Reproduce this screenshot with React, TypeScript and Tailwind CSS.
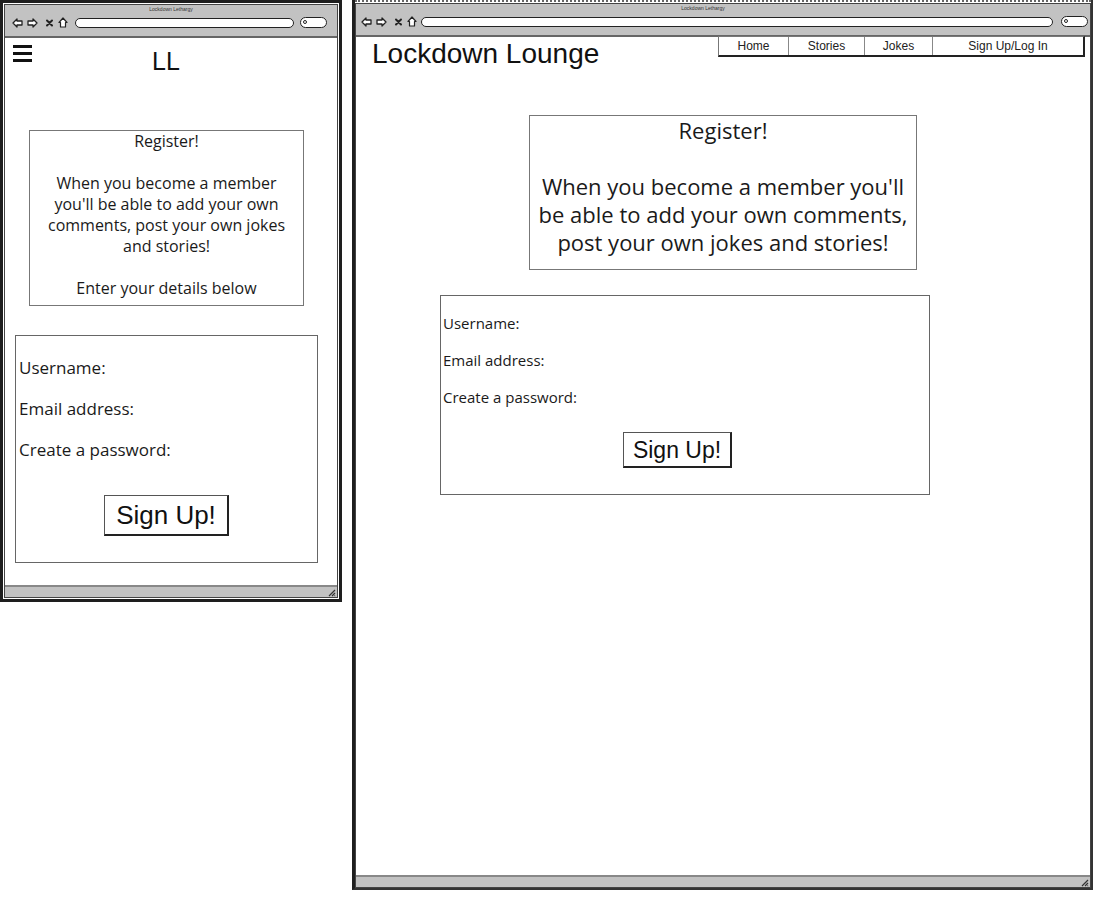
import React from 'react';

const sketch = "font-['Open_Sans',sans-serif]";
const arial = "font-['Liberation_Sans',Arial,sans-serif]";

const ChromeIcons: React.FC = () => (
  <div className="flex items-center gap-[4px] shrink-0">
    <svg width="11" height="10" viewBox="0 0 11 10">
      <polygon points="1,5 5,1 5,3 10,3 10,7 5,7 5,9" fill="white" stroke="#222" strokeWidth="1.3" strokeLinejoin="round" />
    </svg>
    <svg width="11" height="10" viewBox="0 0 11 10">
      <polygon points="10,5 6,1 6,3 1,3 1,7 6,7 6,9" fill="white" stroke="#222" strokeWidth="1.3" strokeLinejoin="round" />
    </svg>
    <svg width="9" height="10" viewBox="0 0 9 10" className="ml-[3px]">
      <path d="M2 2.5 L7 7.5 M7 2.5 L2 7.5" stroke="#222" strokeWidth="2" strokeLinecap="round" />
    </svg>
    <svg width="10" height="11" viewBox="0 0 10 11">
      <polygon points="1,5.5 5,1 9,5.5 7.5,5.5 7.5,10 2.5,10 2.5,5.5" fill="white" stroke="#222" strokeWidth="1.2" strokeLinejoin="round" />
    </svg>
  </div>
);

const SearchPill: React.FC = () => (
  <div className="relative h-[11px] w-[27px] shrink-0 rounded-full border-[1.5px] border-[#222] bg-white">
    <div className="absolute left-[2px] top-[2px] h-[4px] w-[4px] rounded-full border border-[#222]" />
  </div>
);

const Grip: React.FC = () => (
  <svg width="9" height="9" viewBox="0 0 9 9">
    <path d="M8 2 L2 8 M8 5 L5 8 M8 7.5 L7.5 8" stroke="#333" strokeWidth="1.2" />
  </svg>
);

interface WindowProps {
  width: string;
  height: string;
  wide?: boolean;
  children: React.ReactNode;
}

const BrowserWindow: React.FC<WindowProps> = ({ width, height, wide, children }) => (
  <div
    className={`${width} ${height} shrink-0 flex flex-col bg-white ${
      wide
        ? 'border-l-[3px] border-r-2 border-b-2 border-l-[#1e1e1e] border-r-[#333] border-b-[#333]'
        : 'border-[3px] border-[#1e1e1e]'
    }`}
  >
    {wide && <div className="h-[3px] shrink-0 border-t-2 border-dotted border-[#666]" />}
    <div className={`flex-1 flex flex-col border border-[#444] ${wide ? '' : 'm-[1px]'}`}>
      {/* chrome */}
      <div className="h-[33px] shrink-0 bg-[#c2c2c2] border-b-2 border-[#666] flex flex-col">
        <div className={`h-[9px] text-[5px] leading-[9px] text-[#333] ${arial} ${wide ? 'text-center pr-[40px]' : 'text-center'}`}>
          Lockdown Lethargy
        </div>
        <div className={`h-[17px] flex items-center ${wide ? 'pl-[5px] pr-[2px]' : 'pl-[7px] pr-[10px]'}`}>
          <ChromeIcons />
          <div className={`flex-1 h-[10px] rounded-full border-[1.5px] border-[#222] bg-white ${wide ? 'ml-[4px] mr-[8px]' : 'ml-[7px] mr-[6px]'}`} />
          <SearchPill />
        </div>
      </div>

      {/* page */}
      <div className="flex-1 flex flex-col">{children}</div>

      {/* status bar */}
      <div className="h-[12px] shrink-0 bg-[#c2c2c2] border-t-2 border-[#888] flex items-center justify-end pr-[1px]">
        <Grip />
      </div>
    </div>
  </div>
);

const SignUpButton: React.FC<{ big?: boolean }> = ({ big }) => (
  <button
    className={`${arial} bg-white text-[#111] border border-[#555] border-r-2 border-b-2 border-r-[#222] border-b-[#222] ${
      big ? 'w-[125px] h-[41px] text-[26px]' : 'w-[109px] h-[36px] text-[23px]'
    }`}
  >
    Sign Up!
  </button>
);

const MobileView: React.FC = () => (
  <BrowserWindow width="w-[342px]" height="h-[602px]">
    <div className="flex items-start pl-[8px]">
      <div className="mt-[7px] w-[19px] flex flex-col gap-[4px]">
        <div className="h-[3px] bg-[#111]" />
        <div className="h-[3px] bg-[#111]" />
        <div className="h-[3px] bg-[#111]" />
      </div>
      <div className={`flex-1 pr-[37px] mt-[11px] text-center text-[25px] leading-[25px] text-[#111] ${arial}`}>LL</div>
    </div>

    <div className={`ml-[24px] mt-[56px] w-[275px] h-[176px] border border-[#777] text-center text-[16px] leading-[21px] text-[#1a1a1a] ${sketch}`}>
      <p>Register!</p>
      <p className="mt-[21px]">
        When you become a member
        <br />
        you'll be able to add your own
        <br />
        comments, post your own jokes
        <br />
        and stories!
      </p>
      <p className="mt-[21px]">Enter your details below</p>
    </div>

    <div className={`ml-[10px] mt-[29px] w-[303px] h-[228px] border border-[#666] pl-[3px] pt-[22px] text-[17px] leading-[20px] text-[#1a1a1a] ${sketch}`}>
      <div className="flex flex-col gap-[21px]">
        <p>Username:</p>
        <p>Email address:</p>
        <p>Create a password:</p>
      </div>
      <div className="mt-[35px] flex justify-center pr-[3px]">
        <SignUpButton big />
      </div>
    </div>
  </BrowserWindow>
);

const NavCell: React.FC<{ label: string; w: string; last?: boolean }> = ({ label, w, last }) => (
  <div className={`${w} h-full flex items-center justify-center ${last ? '' : 'border-r border-[#888]'}`}>{label}</div>
);

const DesktopView: React.FC = () => (
  <BrowserWindow width="w-[741px]" height="h-[890px]" wide>
    <div className="flex items-start justify-between pl-[16px] pr-[5px]">
      <h1 className={`mt-[1px] text-[28px] leading-[32px] text-[#111] ${arial}`}>Lockdown Lounge</h1>
      <nav className={`-mt-[1px] h-[21px] flex border border-[#777] border-r-2 border-b-2 border-r-[#222] border-b-[#222] bg-white text-[12px] text-[#222] ${arial}`}>
        <NavCell label="Home" w="w-[70px]" />
        <NavCell label="Stories" w="w-[76px]" />
        <NavCell label="Jokes" w="w-[68px]" />
        <NavCell label="Sign Up/Log In" w="w-[150px]" last />
      </nav>
    </div>

    <div className={`self-center mt-[45px] w-[388px] h-[155px] border border-[#777] text-center text-[22px] leading-[28px] text-[#1a1a1a] ${sketch}`}>
      <p>Register!</p>
      <p className="mt-[28px]">
        When you become a member you'll
        <br />
        be able to add your own comments,
        <br />
        post your own jokes and stories!
      </p>
    </div>

    <div className={`ml-[84px] mt-[25px] w-[490px] h-[200px] border border-[#666] pl-[2px] pt-[18px] text-[15px] leading-[18px] text-[#1a1a1a] ${sketch}`}>
      <div className="flex flex-col gap-[19px]">
        <p>Username:</p>
        <p>Email address:</p>
        <p>Create a password:</p>
      </div>
      <div className="mt-[26px] pl-[180px]">
        <SignUpButton />
      </div>
    </div>
  </BrowserWindow>
);

export default function App() {
  return (
    <div className="w-[1095px] h-[898px] bg-white flex items-start gap-[10px]">
      <MobileView />
      <DesktopView />
    </div>
  );
}
